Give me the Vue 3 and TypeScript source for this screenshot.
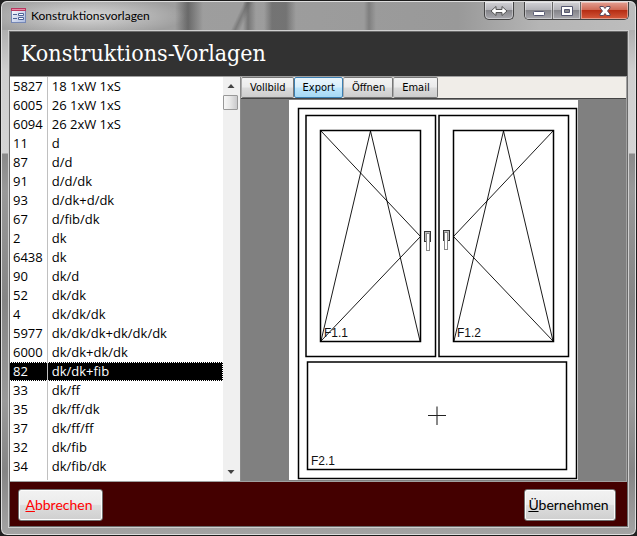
<script setup lang="ts">
import { ref } from 'vue'

interface Template {
  id: number
  name: string
}

const templates: Template[] = [
  { id: 5827, name: '18 1xW 1xS' },
  { id: 6005, name: '26 1xW 1xS' },
  { id: 6094, name: '26 2xW 1xS' },
  { id: 11, name: 'd' },
  { id: 87, name: 'd/d' },
  { id: 91, name: 'd/d/dk' },
  { id: 93, name: 'd/dk+d/dk' },
  { id: 67, name: 'd/fib/dk' },
  { id: 2, name: 'dk' },
  { id: 6438, name: 'dk' },
  { id: 90, name: 'dk/d' },
  { id: 52, name: 'dk/dk' },
  { id: 4, name: 'dk/dk/dk' },
  { id: 5977, name: 'dk/dk/dk+dk/dk/dk' },
  { id: 6000, name: 'dk/dk+dk/dk' },
  { id: 82, name: 'dk/dk+fib' },
  { id: 33, name: 'dk/ff' },
  { id: 35, name: 'dk/ff/dk' },
  { id: 37, name: 'dk/ff/ff' },
  { id: 32, name: 'dk/fib' },
  { id: 34, name: 'dk/fib/dk' },
  { id: 36, name: 'dk/fib/ff' },
]

const tools: string[] = ['Vollbild', 'Export', 'Öffnen', 'Email']

const selectedId = ref<number>(82)
const activeTool = ref<string>('Export')
</script>

<template>
  <div class="window">
    <header class="titlebar">
      <svg class="app-icon" viewBox="0 0 15 15" aria-hidden="true">
        <defs>
          <linearGradient id="form-body" x1="0" y1="0" x2="1" y2="1">
            <stop offset="0" stop-color="#fff" />
            <stop offset="1" stop-color="#a9b9de" />
          </linearGradient>
        </defs>
        <rect x="0.5" y="0.5" width="14" height="14" fill="url(#form-body)" stroke="#7587b5" />
        <rect x="0" y="0" width="15" height="3" fill="#b9375f" />
        <rect x="1" y="1" width="13" height="1" fill="#e88aa6" />
        <path d="M2 6.500h4M2 10.500h4" stroke="#4e6397" />
        <path d="M7.500 5.500h5v2h-5zM7.500 9.500h5v2h-5z" fill="#fff" stroke="#4e6397" />
      </svg>
      <span class="caption">Konstruktionsvorlagen</span>
      <button class="sysbtn resize" type="button" aria-label="Verschieben">
        <svg width="18" height="12" viewBox="0 0 18 12">
          <path d="M1 6l5-4.500v3h6v-3L17 6l-5 4.500v-3H6v3z" fill="#fff" stroke="#555" />
        </svg>
      </button>
      <div class="sysgroup">
        <button class="sysbtn" type="button" aria-label="Minimieren">
          <svg width="14" height="12" viewBox="0 0 14 12">
            <rect x="1.500" y="6.500" width="11" height="4" rx="1" fill="#fff" stroke="#555770" />
          </svg>
        </button>
        <button class="sysbtn" type="button" aria-label="Maximieren">
          <svg width="14" height="12" viewBox="0 0 14 12">
            <path d="M1.500 1.500h11v9h-11zM4.500 4.500v3h5v-3z" fill="#fff" fill-rule="evenodd" stroke="#555770" />
          </svg>
        </button>
        <button class="sysbtn close" type="button" aria-label="Schließen">
          <svg width="14" height="12" viewBox="0 0 14 12">
            <path d="M2 1.500h3.500L7 3.500l1.500-2H12V3L9.500 6 12 9v1.500H8.500L7 8.500l-1.500 2H2V9l2.500-3L2 3z" fill="#fff" stroke="#5a4a5e" stroke-linejoin="round" />
          </svg>
        </button>
      </div>
    </header>

    <main class="client">
      <h1 class="heading">Konstruktions-Vorlagen</h1>

      <div class="content">
        <section class="list">
          <div class="rows">
            <table>
              <tbody>
                <tr
                  v-for="t in templates"
                  :key="t.id"
                  :class="{ selected: t.id === selectedId }"
                  @click="selectedId = t.id"
                >
                  <td class="id">{{ t.id }}</td>
                  <td>{{ t.name }}</td>
                </tr>
              </tbody>
            </table>
          </div>
          <div class="scrollbar">
            <button class="arrow" type="button" aria-label="Nach oben">
              <svg width="8" height="4" viewBox="0 0 8 4"><path d="M0.500 4L4 0l3.500 4z" fill="#444" /></svg>
            </button>
            <div class="thumb"></div>
            <button class="arrow down" type="button" aria-label="Nach unten">
              <svg width="8" height="4" viewBox="0 0 8 4"><path d="M0.500 0L4 4l3.500-4z" fill="#444" /></svg>
            </button>
          </div>
        </section>

        <section class="preview">
          <nav class="toolbar">
            <button
              v-for="tool in tools"
              :key="tool"
              class="tool"
              :class="{ active: tool === activeTool }"
              type="button"
              @click="activeTool = tool"
            >{{ tool }}</button>
          </nav>
          <div class="canvas">
            <svg class="paper" viewBox="289 100 289 380" role="img" aria-label="dk/dk+fib">
              <!-- frame, sashes, glazing -->
              <g fill="none" stroke="#000" stroke-width="1.500">
                <rect x="298.500" y="108.500" width="278" height="370" />
                <rect x="306" y="115.500" width="129.500" height="241" />
                <rect x="439" y="115.500" width="129.500" height="241" />
                <rect x="320.500" y="130.500" width="100" height="211" />
                <rect x="453.500" y="130.500" width="100" height="211" />
                <rect x="307.500" y="362" width="259" height="107.500" />
              </g>
              <!-- opening directions -->
              <g fill="none" stroke="#000" stroke-width="0.900">
                <path d="M321 341L370.500 131L420 341M321 131L420.500 236.500L321 341" />
                <path d="M454 341L503.500 131L553 341M553 131L453.500 236.500L553 341" />
              </g>
              <!-- handles -->
              <g stroke="#333">
                <rect x="424.500" y="231.500" width="6" height="10" fill="#bbb" />
                <rect x="426.500" y="233.500" width="3" height="17" fill="#fff" stroke="#888" />
                <rect x="443.500" y="230.500" width="6" height="10" fill="#bbb" />
                <rect x="444.500" y="232.500" width="3" height="17" fill="#fff" stroke="#888" />
              </g>
              <path d="M437 406.500v18.500" stroke="#888" stroke-width="2" />
              <path d="M428 415.500h18" stroke="#222" />
              <g class="labels">
                <text x="324" y="337">F1.1</text>
                <text x="457" y="337">F1.2</text>
                <text x="311" y="465">F2.1</text>
              </g>
            </svg>
          </div>
        </section>
      </div>

      <footer class="actions">
        <button class="action cancel" type="button"><u>A</u>bbrechen</button>
        <button class="action" type="button"><u>Ü</u>bernehmen</button>
      </footer>
    </main>
  </div>
</template>

<style>
body {
  background: #202020;
}
</style>

<style scoped>
* {
  box-sizing: border-box;
}

button {
  margin: 0;
  padding: 0;
  cursor: pointer;
}

.window {
  display: flex;
  flex-direction: column;
  height: 100vh;
  padding: 0 7px 7px;
  border: 1px solid #1c1c1c;
  border-radius: 7px;
  box-shadow: inset 0 0 0 1px #dedede;
  background: linear-gradient(#b0b0b0 30px, #cfcfcf 70px, #d4d4d4 152px, #8a8a8a 153px, #999 190px, #858585 300px, #9a9a9a 400px, #858585 470px, #a4a4a4);
}

.titlebar {
  display: flex;
  flex: none;
  align-items: flex-start;
  height: 29px;
  margin: 0 -6px;
  padding: 0 6px 0 9px;
  border-top: 1px solid #dedede;
  border-radius: 6px 6px 0 0;
  background:
    radial-gradient(ellipse 100px 20px at 84px 14px, rgba(225, 225, 225, 0.85), transparent),
    linear-gradient(90deg, transparent 173px, rgba(70, 70, 70, 0.6) 186px, transparent 201px),
    linear-gradient(115deg, transparent 219px, rgba(90, 90, 90, 0.5) 223px, transparent 228px),
    linear-gradient(90deg, transparent 241px, rgba(85, 85, 85, 0.55) 246px, transparent 254px, transparent 262px, rgba(75, 75, 75, 0.5) 270px, rgba(75, 75, 75, 0.5) 284px, transparent 294px),
    linear-gradient(90deg, transparent 362px, rgba(100, 100, 100, 0.5) 367px, transparent 374px),
    linear-gradient(90deg, #a0a0a0, #9c9c9c 50%, #999 72%, #b5b5b5 85%, #bdbdbd);
}

.app-icon {
  width: 15px;
  height: 15px;
  margin-top: 6px;
}

.caption {
  flex: 1;
  margin-left: 5px;
  font: 12px/28px Lato, "Open Sans", sans-serif;
  color: #000;
}

.sysgroup {
  display: flex;
  overflow: hidden;
  margin-left: 10px;
  border: 1px solid #444;
  border-top: 0;
  border-radius: 0 0 5px 5px;
}

.sysbtn {
  display: flex;
  align-items: center;
  justify-content: center;
  width: 28px;
  height: 17px;
  border: 0;
  border-right: 1px solid #666;
  background: linear-gradient(#d2d2d6, #b3b3b8 45%, #85858a 50%, #a9a9ae);
  box-shadow: inset 0 0 0 1px rgba(255, 255, 255, 0.4);
}

.resize {
  width: 30px;
  height: 18px;
  border: 1px solid #444;
  border-top: 0;
  border-radius: 0 0 5px 5px;
}

.close {
  width: 47px;
  border-right: 0;
  background: linear-gradient(#e3a093, #cf6b57 45%, #b62e14 50%, #d5593c);
}

.client {
  display: flex;
  flex: 1;
  flex-direction: column;
  min-height: 0;
  border: 1px solid #d0d0d0;
  outline: 1px solid #6a6a6a;
  outline-offset: -2px;
}

.heading {
  flex: none;
  margin: 0;
  padding: 0 12px;
  font: 23px/45px "DejaVu Serif Condensed", "DejaVu Serif", serif;
  color: #fff;
  background: #323232;
  border-bottom: 1px solid #a0a0a0;
}

.content {
  display: grid;
  flex: 1;
  grid-template-columns: 231px 1fr;
  min-height: 0;
}

.list {
  display: flex;
  min-height: 0;
  background: #fff;
}

.rows {
  flex: 1;
  overflow: hidden;
  margin-bottom: 1px;
}

table {
  width: 100%;
  border-collapse: collapse;
  font: 13px/19px "Open Sans", "Noto Sans", sans-serif;
  color: #000;
}

td {
  height: 19px;
  padding: 0 4px;
  white-space: nowrap;
}

.id {
  width: 38px;
  border-right: 1px solid #c0c0c0;
}

.selected {
  color: #fff;
  background: #000;
  outline: 1px dotted #fff;
  outline-offset: -1px;
}

.scrollbar {
  display: flex;
  flex-direction: column;
  width: 17px;
  padding-right: 2px;
  background: #f0f0f0;
}

.arrow {
  display: flex;
  align-items: center;
  justify-content: center;
  height: 18px;
  border: 0;
  background: transparent;
}

.down {
  margin-top: auto;
}

.thumb {
  width: 15px;
  height: 15px;
  border: 1px solid #989898;
  border-radius: 1px;
  background: linear-gradient(90deg, #f6f6f6, #e8e8e8 45%, #c9c9cb);
}

.preview {
  display: flex;
  flex-direction: column;
  min-width: 0;
  min-height: 0;
  border-left: 1px solid #8a8a8a;
  border-right: 2px solid #a0a0a0;
}

.toolbar {
  display: flex;
  flex: none;
  height: 22px;
  background: #f0ede8;
  border-bottom: 1px solid #444;
}

.tool {
  height: 21px;
  padding: 0 7px 0 8px;
  border: 1px solid #777;
  border-left-color: #aaa;
  border-radius: 2px;
  font: 11px/18px "DejaVu Sans Condensed", "DejaVu Sans", sans-serif;
  color: #000;
  background: linear-gradient(#f3f3f3, #ebebeb 48%, #dcdcdc 52%, #cdcdcd);
}

.active {
  border-color: #3c7fb1;
  background: linear-gradient(#eaf6fd, #d7effc 48%, #bde6fd 52%, #a6d9f4);
}

.canvas {
  display: flex;
  flex: 1;
  justify-content: center;
  min-height: 0;
  padding: 1px 0;
  background: #808080;
}

.paper {
  height: 100%;
  max-width: 100%;
  background: #fff;
}

.labels {
  font: 12px "Liberation Sans", Arial, sans-serif;
  fill: #111;
}

.actions {
  display: flex;
  flex: none;
  align-items: center;
  justify-content: space-between;
  padding: 7px 12px 6px 9px;
  background: #440000;
  border-top: 1px solid #a0a0a0;
}

.action {
  height: 32px;
  padding: 0 6px 0 3px;
  min-width: 92px;
  border: 1px solid #707070;
  border-radius: 3px;
  box-shadow: inset 0 0 0 1px #fcfcfc;
  font: 14px/28px Lato, "Open Sans", sans-serif;
  color: #000;
  background: linear-gradient(#f2f2f2, #ebebeb 48%, #dddddd 52%, #cfcfcf);
}

.cancel {
  min-width: 85px;
  color: #f00;
}
</style>
